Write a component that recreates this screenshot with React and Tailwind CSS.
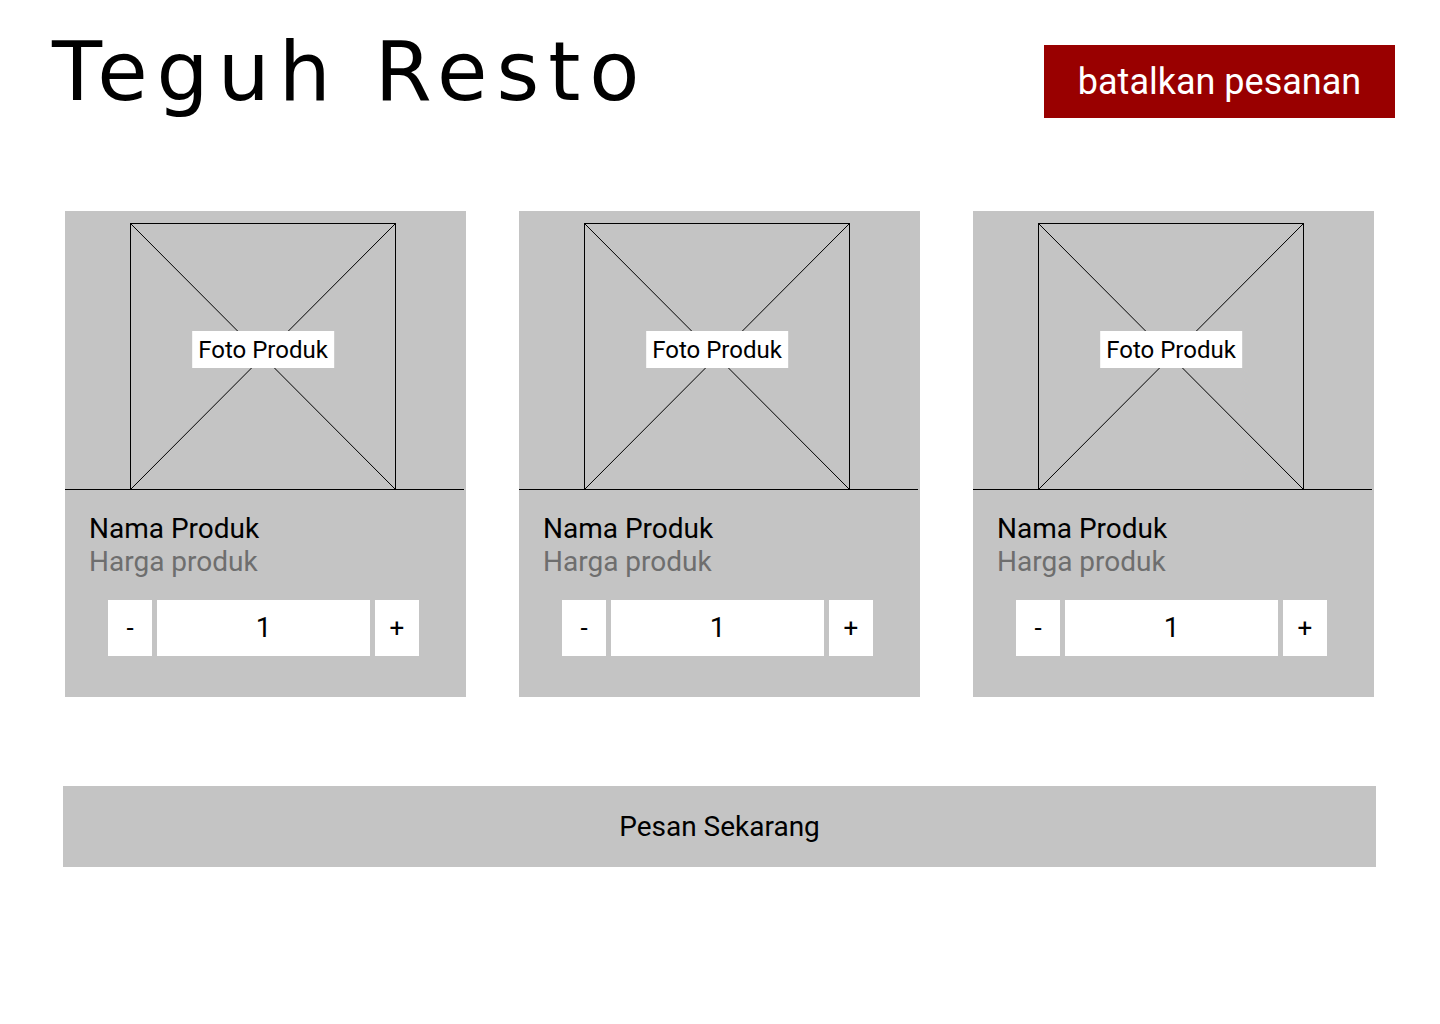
import React, { useState } from 'react';

const products = [
  { id: 1, name: 'Nama Produk', price: 'Harga produk' },
  { id: 2, name: 'Nama Produk', price: 'Harga produk' },
  { id: 3, name: 'Nama Produk', price: 'Harga produk' },
];

function PhotoPlaceholder() {
  return (
    <div className="relative w-[266px] h-[266px] border-t border-l border-r border-black ml-[65px]">
      <svg className="absolute inset-0 w-full h-full" viewBox="0 0 100 100" preserveAspectRatio="none">
        <line x1="0" y1="0" x2="100" y2="100" stroke="black" strokeWidth="1" vectorEffect="non-scaling-stroke" />
        <line x1="100" y1="0" x2="0" y2="100" stroke="black" strokeWidth="1" vectorEffect="non-scaling-stroke" />
      </svg>
      <div className="absolute left-1/2 -translate-x-1/2 top-[107px] h-[37px] px-[6px] bg-white flex items-center text-[24px] text-black whitespace-nowrap">
        Foto Produk
      </div>
    </div>
  );
}

function ProductCard({ product }) {
  const [qty, setQty] = useState(1);

  return (
    <div className="w-[401px] bg-[#c4c4c4] flex flex-col">
      <div className="pt-[12px]">
        <PhotoPlaceholder />
      </div>
      <div className="h-px bg-black mr-[2px]"></div>
      <div className="pl-[24px] pt-[22px] text-[28px] leading-[33px]">
        <p className="text-black">{product.name}</p>
        <p className="text-[#6e6e6e]">{product.price}</p>
      </div>
      <div className="flex gap-[5px] ml-[43px] mt-[22px] mb-[41px]">
        <button
          onClick={() => setQty(Math.max(1, qty - 1))}
          className="w-[44px] h-[56px] bg-white flex items-center justify-center text-[26px] text-black"
        >
          -
        </button>
        <div className="w-[213px] h-[56px] bg-white flex items-center justify-center text-[28px] text-black">
          {qty}
        </div>
        <button
          onClick={() => setQty(qty + 1)}
          className="w-[44px] h-[56px] bg-white flex items-center justify-center text-[26px] text-black"
        >
          +
        </button>
      </div>
    </div>
  );
}

export default function App() {
  return (
    <div className="min-h-screen w-[1440px] bg-white font-['Roboto',sans-serif]">
      <div className="flex justify-between items-start pl-[52px] pr-[45px]">
        <h1 className="mt-[31px] text-[82px] leading-none tracking-[9px] text-black font-['DejaVu_Sans',sans-serif] font-normal">
          Teguh Resto
        </h1>
        <button className="mt-[45px] w-[351px] h-[73px] bg-[#990000] text-white text-[36px] flex items-center justify-center">
          batalkan pesanan
        </button>
      </div>

      <div className="ml-[63px] w-[1313px] mt-[93px]">
        <div className="flex gap-[53px] px-[2px]">
          {products.map((p) => (
            <ProductCard key={p.id} product={p} />
          ))}
        </div>

        <button className="mt-[89px] w-full h-[81px] bg-[#c4c4c4] text-[28px] text-black flex items-center justify-center">
          Pesan Sekarang
        </button>
      </div>
    </div>
  );
}
